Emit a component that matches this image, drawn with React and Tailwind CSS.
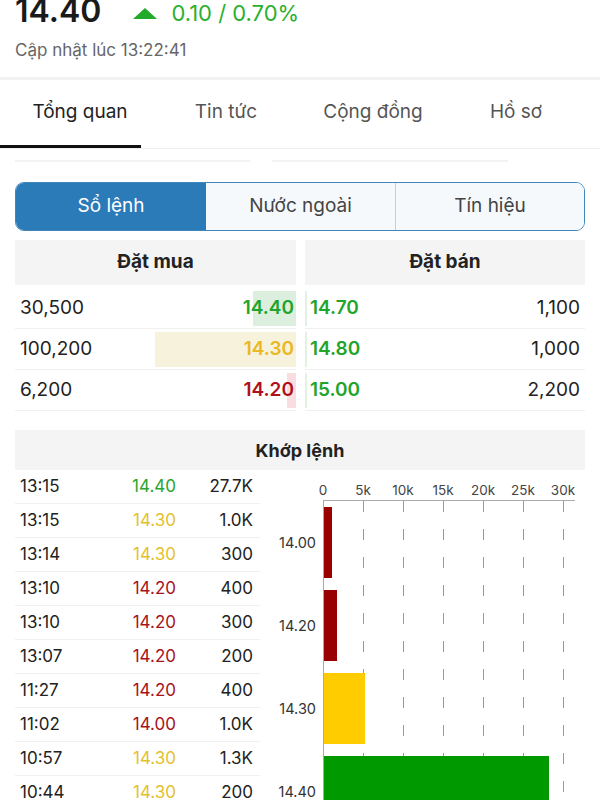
import React from 'react';

const bids = [
    { vol: '30,500', price: '14.40', color: 'text-[#1fa52a]', bar: 'bg-[#dcefdf]', w: 43 },
    { vol: '100,200', price: '14.30', color: 'text-[#e9b823]', bar: 'bg-[#f7f2dc]', w: 141 },
    { vol: '6,200', price: '14.20', color: 'text-[#b0101a]', bar: 'bg-[#f9dde0]', w: 9 },
];

const asks = [
    { price: '14.70', vol: '1,100' },
    { price: '14.80', vol: '1,000' },
    { price: '15.00', vol: '2,200' },
];

const GREEN = 'text-[#2aa52e]';
const YELLOW = 'text-[#e4c12c]';
const RED = 'text-[#a8121c]';

const trades = [
    ['13:15', '14.40', GREEN, '27.7K'],
    ['13:15', '14.30', YELLOW, '1.0K'],
    ['13:14', '14.30', YELLOW, '300'],
    ['13:10', '14.20', RED, '400'],
    ['13:10', '14.20', RED, '300'],
    ['13:07', '14.20', RED, '200'],
    ['11:27', '14.20', RED, '400'],
    ['11:02', '14.00', RED, '1.0K'],
    ['10:57', '14.30', YELLOW, '1.3K'],
    ['10:44', '14.30', YELLOW, '200'],
];

const VolumeChart = () => {
    // x origin 53 within svg (page x 323), 8px per 1k
    const ticks = ['0', '5k', '10k', '15k', '20k', '25k', '30k'];
    const bars = [
        { label: '14.00', w: 8, fill: '#990000' },
        { label: '14.20', w: 13, fill: '#990000' },
        { label: '14.30', w: 41, fill: '#ffcc00' },
        { label: '14.40', w: 225, fill: '#009900' },
    ];
    return (
        <svg width="315" height="330" viewBox="0 0 315 330" className="block">
            {ticks.map((t, i) => (
                <text key={t} x={53 + i * 40} y={25} textAnchor="middle" fontSize="13.5" fill="#444" fontFamily="Inter, sans-serif">{t}</text>
            ))}
            <line x1="53" y1="30.5" x2="305" y2="30.5" stroke="#aaa" strokeWidth="1" />
            {ticks.slice(1).map((t, i) => (
                <line key={t} x1={53 + (i + 1) * 40 + 0.5} y1="31" x2={53 + (i + 1) * 40 + 0.5} y2="330" stroke="#999" strokeWidth="1" strokeDasharray="11 17" />
            ))}
            <line x1="53.5" y1="31" x2="53.5" y2="330" stroke="#aaa" strokeWidth="1" />
            {bars.map((b, i) => (
                <g key={b.label}>
                    <rect x="54" y={37 + i * 83} width={b.w} height="71" fill={b.fill} />
                    <text x="46" y={78 + i * 83} textAnchor="end" fontSize="14.5" fill="#333" fontFamily="Inter, sans-serif">{b.label}</text>
                </g>
            ))}
        </svg>
    );
};

export default function App() {
    return (
        <div className="w-[600px] h-[800px] overflow-hidden bg-white text-[#222]" style={{ fontFamily: 'Inter, "Noto Sans", sans-serif' }}>
            {/* price header */}
            <div className="h-[77px] px-[15px] flex flex-col">
                <div className="flex items-center -mt-[11px] h-[44px]">
                    <span className="text-[32px] font-semibold text-[#1a1a1a]">14.40</span>
                    <span className="ml-[32px] w-0 h-0 border-l-[12px] border-r-[12px] border-b-[11px] border-l-transparent border-r-transparent border-b-[#22aa2a] mt-[4px]"></span>
                    <span className="ml-[14px] text-[22px] text-[#2ab02e] mt-[4px]">0.10 / 0.70%</span>
                </div>
                <div className="text-[17px] text-[#666] mt-[5px]">Cập nhật lúc 13:22:41</div>
            </div>
            <div className="h-[3px] bg-[#f2f2f2]"></div>

            {/* tabs */}
            <div className="flex h-[65px] items-center text-[19px] text-[#555]">
                <div className="w-[160px] text-center text-[#222]">Tổng quan</div>
                <div className="w-[132px] text-center">Tin tức</div>
                <div className="w-[162px] text-center">Cộng đồng</div>
                <div className="w-[124px] text-center">Hồ sơ</div>
            </div>
            <div className="flex items-end border-b border-[#eee]">
                <div className="w-[141px] h-[3px] bg-[#111]"></div>
            </div>
            <div className="flex gap-[22px] px-[15px] pt-[11px]">
                <div className="w-[235px] h-[2px] bg-[#f3f3f3]"></div>
                <div className="w-[236px] h-[2px] bg-[#f3f3f3]"></div>
            </div>

            {/* segmented control */}
            <div className="mx-[15px] mt-[20px] h-[49px] flex rounded-[9px] border-[1.5px] border-[#3f86bd] overflow-hidden text-[19px]">
                <div className="w-[190px] bg-[#2b7bb9] text-white flex items-center justify-center">Sổ lệnh</div>
                <div className="w-[190px] bg-[#f6f9fc] text-[#444] flex items-center justify-center border-r border-[#c9cfd6]">Nước ngoài</div>
                <div className="flex-1 bg-[#f6f9fc] text-[#444] flex items-center justify-center">Tín hiệu</div>
            </div>

            {/* order book */}
            <div className="mx-[15px] mt-[9px] flex gap-[9px]">
                <div className="w-[281px]">
                    <div className="h-[45px] bg-[#f4f4f4] flex items-center justify-center text-[19px] font-bold text-[#222] mb-[3px]">Đặt mua</div>
                    {bids.map((b) => (
                        <div key={b.price} className="h-[41px] flex items-center justify-between border-b border-[#f0f0f0] text-[19px]">
                            <span className="pl-[5px] text-[#222]">{b.vol}</span>
                            <div className="h-[35px] flex items-center justify-end relative" style={{ width: b.w }}>
                                <div className={`absolute inset-0 ${b.bar}`}></div>
                                <span className={`relative font-semibold pr-[2px] ${b.color}`}>{b.price}</span>
                            </div>
                        </div>
                    ))}
                </div>
                <div className="flex-1">
                    <div className="h-[45px] bg-[#f4f4f4] flex items-center justify-center text-[19px] font-bold text-[#222] mb-[3px]">Đặt bán</div>
                    {asks.map((a) => (
                        <div key={a.price} className="h-[41px] flex items-center justify-between border-b border-[#f0f0f0] text-[19px]">
                            <div className="flex items-center h-[35px]">
                                <div className="w-[2px] h-full bg-[#e2f1e3]"></div>
                                <span className="pl-[3px] font-semibold text-[#1fa52a]">{a.price}</span>
                            </div>
                            <span className="pr-[5px] text-[#222]">{a.vol}</span>
                        </div>
                    ))}
                </div>
            </div>

            {/* matched orders */}
            <div className="mx-[15px] mt-[19px]">
                <div className="h-[40px] bg-[#f4f4f4] flex items-center justify-center text-[18px] font-bold text-[#222]">Khớp lệnh</div>
                <div className="flex">
                    <div className="w-[245px]">
                        {trades.map((t, i) => (
                            <div key={i} className="h-[34px] flex items-center border-b border-[#f0f0f0] text-[17px]">
                                <span className="pl-[5px] w-[70px] text-[#222]">{t[0]}</span>
                                <span className={`w-[91px] text-right ${t[2]}`}>{t[1]}</span>
                                <span className="w-[77px] text-right text-[#222]">{t[3]}</span>
                            </div>
                        ))}
                    </div>
                    <div className="ml-[10px]">
                        <VolumeChart />
                    </div>
                </div>
            </div>
        </div>
    );
}
